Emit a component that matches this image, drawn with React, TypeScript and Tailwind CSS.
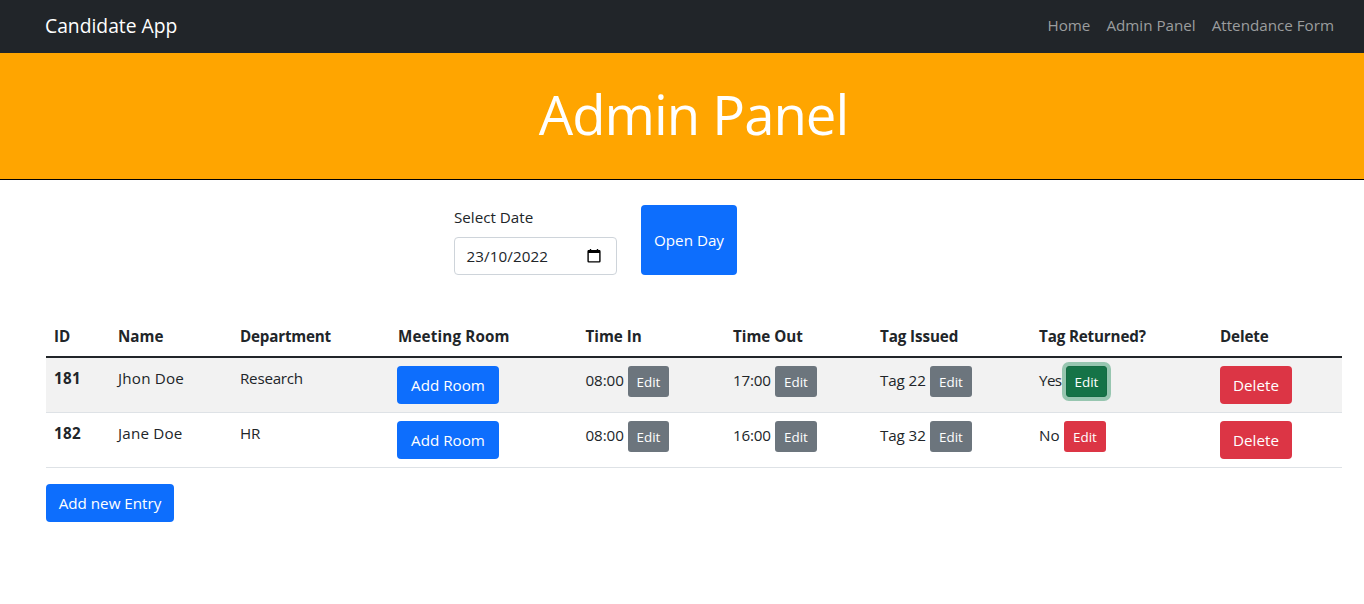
import { ReactNode } from "react";

type Entry = {
  id: number;
  name: string;
  department: string;
  timeIn: string;
  timeOut: string;
  tag: string;
  returned: boolean;
};

const entries: Entry[] = [
  { id: 181, name: "Jhon Doe", department: "Research", timeIn: "08:00", timeOut: "17:00", tag: "Tag 22", returned: true },
  { id: 182, name: "Jane Doe", department: "HR", timeIn: "08:00", timeOut: "16:00", tag: "Tag 32", returned: false },
];

const columns = [
  { label: "ID", width: "w-[64px]", tracking: "" },
  { label: "Name", width: "w-[122px]", tracking: "" },
  { label: "Department", width: "w-[157px]", tracking: "tracking-[-0.2px]" },
  { label: "Meeting Room", width: "w-[188.5px]", tracking: "tracking-[0.15px] pl-[9px]" },
  { label: "Time In", width: "w-[147.5px]", tracking: "" },
  { label: "Time Out", width: "w-[147px]", tracking: "" },
  { label: "Tag Issued", width: "w-[159px]", tracking: "tracking-[-0.1px]" },
  { label: "Tag Returned?", width: "w-[181px]", tracking: "tracking-[-0.15px]" },
  { label: "Delete", width: "w-[130px]", tracking: "tracking-[-0.15px]" },
];

function Button({ className, children }: { className: string; children: ReactNode }) {
  return (
    <button type="button" className={`flex items-center justify-center whitespace-nowrap rounded text-white ${className}`}>
      {children}
    </button>
  );
}

function EditCell({ value, valueClass, buttonClass }: { value: string; valueClass: string; buttonClass: string }) {
  return (
    <td className="px-2 pt-2 align-top">
      <div className="flex">
        <span className={`h-[31px] whitespace-nowrap leading-[29px] ${valueClass}`}>{value}</span>
        <button type="button" className={`h-[31px] rounded-[3px] text-[13.4px] text-white ${buttonClass}`}>
          Edit
        </button>
      </div>
    </td>
  );
}

function CalendarIcon() {
  return (
    <svg width="14" height="16" viewBox="0 0 14 16" fill="none" aria-hidden="true">
      <path d="M3.5 1v2M10.5 1v2" stroke="#000" strokeWidth="1.4" />
      <path d="M1 2.2h12V5H1z" fill="#000" />
      <rect x="1.1" y="2.7" width="11.8" height="11.2" rx="0.7" stroke="#000" strokeWidth="1.4" />
    </svg>
  );
}

export default function App() {
  return (
    <div className="min-h-[604px] bg-white font-['Open_Sans','Noto_Sans',sans-serif] text-[15.2px] leading-6 text-[#212529]">
      <nav className="flex h-[53px] items-center justify-between bg-[#212529] pr-[30px] pb-[2px] pl-[45px]">
        <a href="#" className="text-[19.3px] leading-[30px] text-white">Candidate App</a>
        <div className="flex gap-4 pb-[2px] text-[#9b9d9e]">
          <a href="#">Home</a>
          <a href="#">Admin Panel</a>
          <a href="#">Attendance Form</a>
        </div>
      </nav>

      <header className="flex h-[127px] justify-center border-b border-black bg-[#ffa500] pt-[28px] pl-[23px]">
        <h1 className="text-[54.5px] leading-[67px] tracking-[-1px] text-white">Admin Panel</h1>
      </header>

      <main className="pr-[22px] pl-[46px]">
        <form className="flex h-[95px] gap-6 pt-[25px] pl-[408px]">
          <div className="w-[163px]">
            <label className="block h-8">Select Date</label>
            <div className="flex h-[38px] items-center justify-between rounded border border-[#ced4da] pr-[15px] pl-[11.5px]">
              <span className="tracking-[0.1px]">23/10/2022</span>
              <CalendarIcon />
            </div>
          </div>
          <Button className="h-[70px] w-24 bg-[#0d6efd]">Open Day</Button>
        </form>

        <table className="mt-[42px] w-[1296px] table-fixed border-separate border-spacing-0 text-left">
          <thead>
            <tr className="h-[41px]">
              {columns.map((c) => (
                <th key={c.label} className={`h-[41px] border-b-2 border-[#212529] px-2 pt-[7px] pb-2 align-top font-bold whitespace-nowrap ${c.width} ${c.tracking}`}>
                  {c.label}
                </th>
              ))}
            </tr>
          </thead>
          <tbody className="[&_td]:border-b [&_td]:border-[#dee2e6]">
            {entries.map((e) => (
              <tr key={e.id} className="h-[55px] odd:bg-[#f2f2f2]">
                <td className="px-2 pt-2 align-top font-bold tracking-[0.3px]">{e.id}</td>
                <td className="px-2 pt-2 align-top tracking-[0.2px]">{e.name}</td>
                <td className="px-2 pt-2 align-top tracking-[-0.25px]">{e.department}</td>
                <td className="px-2 pt-2 align-top">
                  <Button className="h-[38px] w-[102px] bg-[#0d6efd]">Add Room</Button>
                </td>
                <EditCell value={e.timeIn} valueClass="w-[42.5px] tracking-[-0.1px]" buttonClass="w-[41px] bg-[#6c757d]" />
                <EditCell value={e.timeOut} valueClass="w-[42px] tracking-[-0.2px]" buttonClass="w-[42px] bg-[#6c757d]" />
                <EditCell value={e.tag} valueClass="w-[50px] tracking-[-0.1px]" buttonClass="w-[42px] bg-[#6c757d]" />
                <EditCell
                  value={e.returned ? "Yes" : "No"}
                  valueClass={e.returned ? "w-[27px] tracking-[-0.6px]" : "w-[25px]"}
                  buttonClass={
                    e.returned
                      ? "w-[41px] border border-[#146c43] bg-[#157347] ring-4 ring-[#3c996e]/50"
                      : "w-[42px] bg-[#dc3545]"
                  }
                />
                <td className="px-2 pt-2 align-top">
                  <Button className="h-[38px] w-[72px] bg-[#dc3545]">Delete</Button>
                </td>
              </tr>
            ))}
          </tbody>
        </table>

        <Button className="mt-4 h-[38px] w-32 bg-[#0d6efd]">Add new Entry</Button>
      </main>
    </div>
  );
}
